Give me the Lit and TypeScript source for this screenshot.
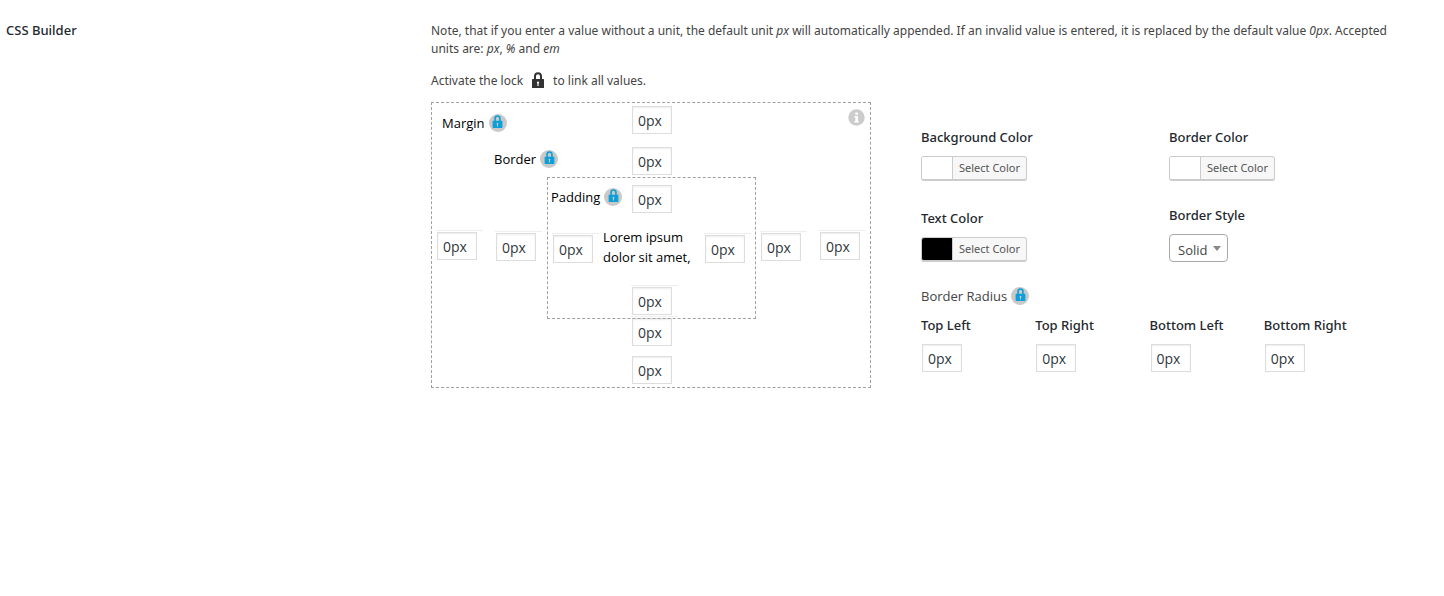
import { LitElement, html, css } from "lit";
import { customElement, property } from "lit/decorators.js";

const lockShape = html`
  <svg viewBox="0 0 12 16" width="12" height="16" aria-hidden="true">
    <path d="M3 8V4.2a3 3 0 0 1 6 0V8" fill="none" stroke="currentColor" stroke-width="2" />
    <path fill="currentColor" fill-rule="evenodd"
      d="M0.5 7h11q.5 0 .5 .5v8q0 .5-.5 .5H.5q-.5 0-.5-.5v-8q0-.5.5-.5zM6 9.4a1.2 1.2 0 0 0-.6 2.2V14h1.2v-2.4A1.2 1.2 0 0 0 6 9.4z" />
  </svg>`;

@customElement("lock-button")
class LockButton extends LitElement {
  @property() label = "";
  static styles = css`
    :host { display: inline-flex; }
    button {
      display: flex; align-items: center; justify-content: center;
      width: 18px; height: 18px; padding: 0 0 3px; border: 0; border-radius: 50%;
      background: #c9c9c9; color: #0d9fd8; cursor: pointer;
    }
    svg { width: 11px; height: 13px; }
  `;
  render() {
    return html`<button type="button" aria-label=${this.label}>${lockShape}</button>`;
  }
}

@customElement("color-picker")
class ColorPicker extends LitElement {
  @property() color = "#fff";
  @property() label = "";
  static styles = css`
    :host { display: block; }
    button {
      display: flex; align-items: stretch; height: 25px; padding: 0; overflow: hidden;
      border: 1px solid #ccc; border-bottom-width: 2px; border-radius: 3px;
      background: #f7f7f7; color: #555; cursor: pointer;
      font: 11px/22px "Noto Sans", sans-serif;
    }
    .swatch { width: 30px; border-right: 1px solid #ccc; }
    .text { padding: 0 6px; }
  `;
  render() {
    return html`<button type="button" aria-label="${this.label}: Select Color">
      <span class="swatch" style="background:${this.color}"></span><span class="text">Select Color</span>
    </button>`;
  }
}

@customElement("app-root")
class AppRoot extends LitElement {
  static styles = css`
    * { box-sizing: border-box; }
    :host {
      display: block; background: #fff; color: #444;
      font: 13px/18px "Open Sans", "Noto Sans", sans-serif;
    }
    .row { display: grid; grid-template-columns: 425px minmax(0, 1fr); padding: 21px 30px 20px 6px; }
    .body { padding-top: 1px; }
    h1, h2, p { margin: 0; line-height: 18px; }
    p { font-family: "Noto Sans", sans-serif; font-size: 12px; }
    h1, h2, .name { font-family: "Noto Sans", sans-serif; font-size: 13px; font-weight: 500; color: #23282d; }
    .hint { display: flex; align-items: center; margin-top: 14px; gap: 9px; }
    .hint svg { color: #333; margin-bottom: 2px; }
    .tools { display: flex; align-items: flex-start; gap: 50px; margin-top: 12px; }
    input {
      display: block; width: 40px; height: 28px; padding: 2px 5px; margin: 0;
      border: 1px solid #ddd; border-radius: 0; background: #fff; color: #32373c;
      box-shadow: inset 0 1px 2px rgba(0, 0, 0, 0.07);
      font: 14px/20px "Open Sans", "Noto Sans", sans-serif;
    }
    .cell { width: 47px; padding: 1px 0 0 1px; border-top: 1px solid #eee; }
    .cell.plain { border-color: transparent; }
    .model {
      flex: none; display: grid; width: 440px; padding: 0 4px;
      grid-template-columns: 59px 52px 1fr 63px 47px;
      grid-template-rows: 41px 33px 142px 34px 34px;
      border: 1px dashed #a0a0a0; color: #000;
    }
    .caption { display: flex; align-items: center; gap: 4px; height: 18px; white-space: nowrap; }
    .margin-caption { grid-area: 1 / 1 / 2 / 4; margin: 11px 0 0 6px; }
    .border-caption { grid-area: 2 / 2 / 3 / 4; margin: 6px 0 0 -1px; }
    .info { grid-area: 1 / 5; justify-self: end; margin: 6px 1px 0 0; padding: 0; border: 0; background: none; width: 17px; height: 17px; }
    .info svg { display: block; }
    .mid { grid-column: 3; margin-left: 84px; }
    .r1 { grid-row: 1; margin-top: 1px; }
    .r2 { grid-row: 2; margin-top: 1px; }
    .r4 { grid-row: 4; align-self: start; margin-top: -3px; }
    .r5 { grid-row: 5; margin-top: 1px; }
    .side { grid-row: 3; align-self: center; }
    .outer { padding-bottom: 6px; }
    .near { padding-bottom: 4px; }
    .c1 { grid-column: 1; }
    .c2 { grid-column: 2; }
    .c4 { grid-column: 4; margin-left: 4px; }
    .c5 { grid-column: 5; }
    .content {
      grid-area: 3 / 3; display: grid; padding: 0 4px 0 3px; border: 1px dashed #a0a0a0;
      grid-template-columns: 52px 1fr 47px; grid-template-rows: 40px 1fr 33px;
    }
    .pad-caption { grid-area: 1 / 1 / 2 / 4; margin-top: 10px; }
    .pad-mid { grid-column: 1 / 4; margin-left: 80px; }
    .pad-top { grid-row: 1; margin-top: 5px; }
    .pad-bottom { grid-row: 3; }
    .pad-left { grid-area: 2 / 1; margin: 15px 0 0 1px; }
    .pad-right { grid-area: 2 / 3; margin-top: 15px; }
    .sample { grid-area: 2 / 2; margin-top: 9px; line-height: 20px; white-space: nowrap; }
    .settings { flex: 0 1 457px; padding-top: 26px; }
    .pair { display: grid; grid-template-columns: 248px 1fr; }
    .field h2, .field .name { display: block; margin-bottom: 10px; }
    .second { margin-top: 25px; }
    .text-color { padding-top: 3px; }
    .select { position: relative; width: 59px; }
    select {
      display: block; width: 59px; height: 28px; padding: 4px 8px 0; margin: 0; appearance: none;
      border: 1px solid #aaa; border-radius: 4px; background: #fff; color: #444;
      font: 13px/20px "Open Sans", "Noto Sans", sans-serif;
    }
    .arrow { position: absolute; right: 7px; top: 12px; border: 4px solid transparent; border-top: 5px solid #888; border-bottom: 0; }
    .radius { margin-top: 25px; }
    .corners { display: grid; grid-template-columns: repeat(4, 1fr); margin-top: 11px; }
    .corners input { margin-left: 1px; }
  `;

  private cell(classes: string, label: string) {
    return html`<div class="cell ${classes}"><input type="text" .value=${"0px"} aria-label=${label} /></div>`;
  }

  render() {
    return html`
      <div class="row">
        <h1>CSS Builder</h1>
        <div class="body">
          <p>Note, that if you enter a value without a unit, the default unit <em>px</em> will automatically appended. If an invalid value is entered, it is replaced by the default value <em>0px</em>. Accepted units are: <em>px</em>, <em>%</em> and <em>em</em></p>
          <p class="hint"><span>Activate the lock</span>${lockShape}<span>to link all values.</span></p>
          <div class="tools">
            <div class="model">
              <div class="caption margin-caption">Margin <lock-button label="Link margins"></lock-button></div>
              ${this.cell("plain mid r1", "Margin top")}
              <button class="info" type="button" aria-label="Information">
                <svg viewBox="0 0 17 17" width="17" height="17" aria-hidden="true">
                  <circle cx="8.5" cy="8.5" r="8.2" fill="#ccc" />
                  <path fill="#fff" d="M7.3 3.5h2.6v2.2H7.3zM6.5 7h3.4v5h.9v1.4H6.5V12h.9V8.4h-.9z" />
                </svg>
              </button>
              <div class="caption border-caption">Border <lock-button label="Link borders"></lock-button></div>
              ${this.cell("plain mid r2", "Border top")}
              ${this.cell("side outer c1", "Margin left")}
              ${this.cell("side near c2", "Border left")}
              ${this.cell("mid r4", "Border bottom")}
              <div class="content">
                <div class="caption pad-caption">Padding <lock-button label="Link paddings"></lock-button></div>
                ${this.cell("plain pad-mid pad-top", "Padding top")}
                ${this.cell("pad-left", "Padding left")}
                <div class="sample">Lorem ipsum<br />dolor sit amet,</div>
                ${this.cell("pad-right", "Padding right")}
                ${this.cell("pad-mid pad-bottom", "Padding bottom")}
              </div>
              ${this.cell("side near c4", "Border right")}
              ${this.cell("side outer c5", "Margin right")}
              ${this.cell("plain mid r5", "Margin bottom")}
            </div>
            <div class="settings">
              <div class="pair">
                <div class="field"><h2>Background Color</h2><color-picker label="Background Color"></color-picker></div>
                <div class="field"><h2>Border Color</h2><color-picker label="Border Color"></color-picker></div>
              </div>
              <div class="pair second">
                <div class="field text-color"><h2>Text Color</h2><color-picker label="Text Color" color="#000"></color-picker></div>
                <div class="field">
                  <label class="name" for="style">Border Style</label>
                  <div class="select">
                    <select id="style"><option>Solid</option><option>Dashed</option><option>Dotted</option></select>
                    <span class="arrow"></span>
                  </div>
                </div>
              </div>
              <div class="caption radius">Border Radius <lock-button label="Link radii"></lock-button></div>
              <div class="corners">
                ${["Top Left", "Top Right", "Bottom Left", "Bottom Right"].map(
                  (name, i) => html`<div class="field"><label class="name" for="corner${i}">${name}</label><input id="corner${i}" type="text" .value=${"0px"} /></div>`
                )}
              </div>
            </div>
          </div>
        </div>
      </div>`;
  }
}
